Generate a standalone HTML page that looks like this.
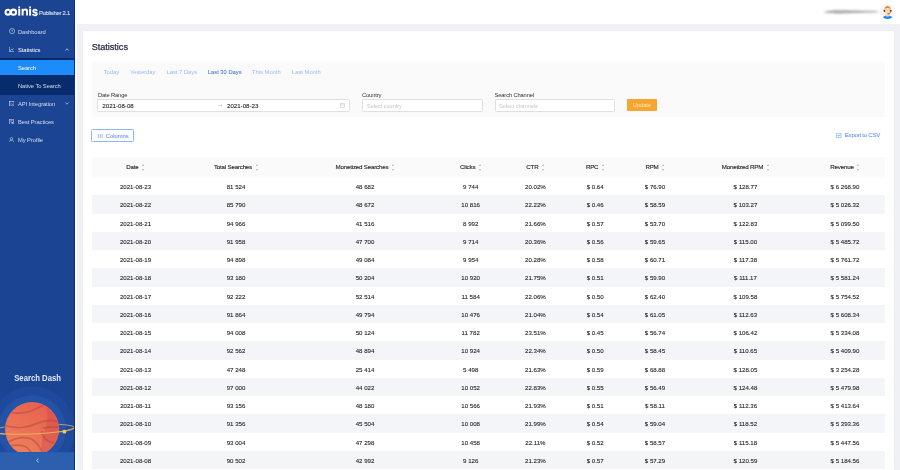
<!DOCTYPE html>
<html><head><meta charset="utf-8">
<style>
*{margin:0;padding:0;box-sizing:border-box}
html,body{width:900px;height:470px;overflow:hidden;background:#fff;font-family:"Liberation Sans",sans-serif}
.a{position:absolute}
#side{left:0;top:0;width:75.2px;height:470px;background:#1b4493;overflow:hidden}
.mi{position:absolute;left:0;width:75px;color:#d3dcee;font-size:5.8px;white-space:nowrap;letter-spacing:-0.08px}
.mi .t{position:absolute;left:18px}
#hdr{left:75.2px;top:0;width:824.8px;height:24px;background:#fff}
#bg{left:77px;top:23.9px;width:823px;height:447px;background:#f0f1f5}
#card{left:82.8px;top:30.5px;width:811.3px;height:440px;background:#fff;box-shadow:0 0 2px rgba(0,0,0,0.05)}
.tr{position:absolute;left:91.6px;width:793.8px;height:18.25px}
.tr.g{background:#f4f5f9}
.c{position:absolute;top:0;height:18.25px;line-height:20.2px;text-align:center;font-size:6.1px;color:#262626;white-space:nowrap;-webkit-text-stroke:0.1px #262626}
.thbg{background:#fafafa}
.th{text-align:center;white-space:nowrap;font-size:6.2px;font-weight:normal;color:#2b2b2b;letter-spacing:-0.2px;-webkit-text-stroke:0.14px #2b2b2b}
.th .ht{display:inline-block;vertical-align:middle;line-height:20.3px}
.th .sorter{display:inline-block;vertical-align:middle;width:2.6px;height:7px;margin-left:3.5px;position:relative;top:-0.2px}
.sorter i{position:absolute;left:0;width:0;height:0;border-left:1.4px solid transparent;border-right:1.4px solid transparent}
.sorter i.up{top:-0.2px;border-bottom:2.1px solid #b4b4b4}
.sorter i.dn{top:4.9px;border-top:2.1px solid #b4b4b4}
.flt{background:#fafafa}
.preset{position:absolute;top:68.8px;font-size:5.8px;color:#97bbf3;white-space:nowrap}
.lbl{position:absolute;font-size:5.8px;color:#333;white-space:nowrap;letter-spacing:-0.15px}
.inp{position:absolute;background:#fff;border:0.5px solid #e0e0e0;border-radius:1.5px;margin-top:-0.3px}
.ph{position:absolute;font-size:5.5px;color:#c4c4c4;white-space:nowrap;margin-top:0.4px}
</style></head><body>
<div id="wrap" style="position:absolute;left:0;top:0;width:900px;height:470px;will-change:transform">
<div id="side" class="a">
  <!-- logo -->
  <svg class="a" style="left:0;top:0" width="75" height="20" viewBox="0 0 75 20">
    <circle cx="8.0" cy="12.15" r="2.45" fill="none" stroke="#fff" stroke-width="2.1"/>
    <circle cx="13.5" cy="12.15" r="2.55" fill="none" stroke="#fff" stroke-width="2.1"/>
    <circle cx="9.9" cy="9.9" r="0.75" fill="#f5b335"/>
    <rect x="18.2" y="8.7" width="2" height="6.9" fill="#fff"/>
    <circle cx="19.2" cy="7.2" r="1" fill="#fff"/>
    <rect x="29.1" y="8.7" width="2" height="6.9" fill="#fff"/>
    <circle cx="30.1" cy="7.2" r="1" fill="#fff"/>
    <path d="M21.6 15.6V8.7H23.5V9.6C24 9 24.8 8.6 25.6 8.6C27.2 8.6 28 9.6 28 11.3V15.6H26.1V11.8C26.1 10.9 25.7 10.4 25 10.4C24.2 10.4 23.6 11 23.6 12V15.6Z" fill="#fff"/>
    <text x="32" y="15.6" font-family="Liberation Sans" font-weight="bold" font-size="13.3" fill="#fff" stroke="#fff" stroke-width="0.35" transform="translate(32 0) scale(0.8 1) translate(-32 0)">s</text>
  </svg>
  <div class="a" style="left:38.9px;top:10px;font-size:5.9px;color:#d9e2f2;white-space:nowrap;letter-spacing:-0.25px;-webkit-text-stroke:0.1px #d9e2f2">Publisher 2.1</div>
  <!-- menu -->
  <div class="mi" style="top:29px"><svg class="a" style="left:8.6px;top:-0.6px" width="6.2" height="6.2" viewBox="0 0 12 12"><circle cx="6" cy="6" r="5" fill="none" stroke="#d3dcee" stroke-width="1.2"/><path d="M6 3.2V6.2L7.8 6.2" fill="none" stroke="#d3dcee" stroke-width="1.1"/></svg><span class="t">Dashboard</span></div>
  <div class="mi" style="top:47px;color:#fff"><svg class="a" style="left:8.9px;top:0px" width="5" height="5" viewBox="0 0 10 10"><path d="M0.6 0V9.4H10M2.5 7.5L5 4.5L6.5 6L9 3" fill="none" stroke="#e8eef8" stroke-width="1.2"/></svg><span class="t">Statistics</span><svg class="a" style="left:64.5px;top:1px" width="4" height="3" viewBox="0 0 8 6"><path d="M0.8 5L4 1.5L7.2 5" fill="none" stroke="#e8eef8" stroke-width="1.3"/></svg></div>
  <div class="a" style="left:0;top:57.6px;width:75.2px;height:37px;background:#072b6c"></div>
  <div class="a" style="left:0;top:59.8px;width:75.2px;height:15.2px;background:#1d8cfb"></div>
  <div class="mi" style="top:64.6px;color:#fff"><span class="t">Search</span></div>
  <div class="mi" style="top:82.6px;color:#d3dcee"><span class="t">Native To Search</span></div>
  <div class="mi" style="top:101px"><svg class="a" style="left:8.8px;top:-0.2px" width="5.3" height="5.3" viewBox="0 0 10 10"><rect x="0.6" y="0.6" width="8.8" height="8.8" fill="none" stroke="#d3dcee" stroke-width="1.1"/><path d="M2.5 3L4.2 4.7L2.5 6.4M5 7H7.5" fill="none" stroke="#d3dcee" stroke-width="1"/></svg><span class="t">API Integration</span><svg class="a" style="left:64.8px;top:1px" width="4" height="3" viewBox="0 0 8 6"><path d="M0.8 1L4 4.5L7.2 1" fill="none" stroke="#d3dcee" stroke-width="1.3"/></svg></div>
  <div class="mi" style="top:118.9px"><svg class="a" style="left:9px;top:-0.3px" width="5" height="5.8" viewBox="0 0 10 11"><rect x="0.6" y="0.6" width="8.8" height="9.8" fill="none" stroke="#d3dcee" stroke-width="1.1"/><path d="M2.5 3H7.5M2.5 5.5H5" fill="none" stroke="#d3dcee" stroke-width="1"/><circle cx="6.5" cy="7.5" r="1.6" fill="#d3dcee"/></svg><span class="t">Best Practices</span></div>
  <div class="mi" style="top:136.6px"><svg class="a" style="left:9px;top:0px" width="5" height="5.6" viewBox="0 0 10 11"><circle cx="5" cy="3.5" r="2.6" fill="none" stroke="#d3dcee" stroke-width="1.1"/><path d="M0.7 10.5C0.7 7.5 2.5 6.3 5 6.3S9.3 7.5 9.3 10.5" fill="none" stroke="#d3dcee" stroke-width="1.1"/></svg><span class="t">My Profile</span></div>
  <!-- search dash -->
  <svg class="a" style="left:0;top:380px" width="75.2" height="72" viewBox="0 380 75.2 72">
    <circle cx="32.1" cy="429.2" r="43" fill="#1f4a9b"/>
    <circle cx="32.1" cy="429.2" r="34" fill="#2452a6"/>
    <defs>
      <linearGradient id="pg" x1="0.1" y1="1" x2="0.7" y2="0">
        <stop offset="0" stop-color="#f0835c"/>
        <stop offset="1" stop-color="#e6604f"/>
      </linearGradient>
      <clipPath id="pc"><circle cx="32.1" cy="429.2" r="26.9"/></clipPath>
    </defs>
    <ellipse cx="33" cy="429.4" rx="41.5" ry="5" transform="rotate(-2.5 33 429.4)" fill="none" stroke="#f0c05a" stroke-width="0.7"/>
    <circle cx="32.1" cy="429.2" r="27.6" fill="#1f58b8"/>
    <circle cx="32.1" cy="429.2" r="26.9" fill="url(#pg)"/>
    <g clip-path="url(#pc)">
      <path d="M44.6 402C48 410 48.5 420 45 430S41 446 42 458L62 458L62 400Z" fill="#c8424a" fill-opacity="0.35"/>
      <g fill="none" stroke="#a8403c" stroke-opacity="0.45" stroke-width="1.7" stroke-linecap="round">
        <path d="M12 412.5C18 413.5 24 413 29 411.5S40 407 45 404"/>
        <path d="M5.5 425.8C12 427.5 19 428 25 427S34 424.5 38 423S46 420 52 420.5S58 421.5 60 422"/>
        <path d="M43.5 428C48 427 54 426.8 60 427.2"/>
        <path d="M42 431.5C42 435 44 439 49.5 441.5S56 443 58 443"/>
        <path d="M8 442.2C13 439.5 18 438 22 437.7S30 437.8 33 440S39 446 42 451"/>
        <path d="M12 445.3C16 445 21 445 24 446S29 449 31 452"/>
      </g>
    </g>
    <circle cx="32.1" cy="429.2" r="26.6" fill="none" stroke="#f26a48" stroke-width="0.6" stroke-opacity="0.9"/>
    <path d="M-8.3 431.2 A41.5 5 -2.5 0 0 74.3 427.6" fill="none" stroke="#f0c05a" stroke-width="0.8"/>
    <circle cx="64.4" cy="431.7" r="1.9" fill="#f7c94a"/>
  </svg>
  <div class="a" style="left:0;top:372.9px;width:75.2px;text-align:center;font-size:8.9px;font-weight:bold;color:#e3eaf6;white-space:nowrap;transform:scaleX(0.87);transform-origin:37.6px 0">Search Dash</div>
  <div class="a" style="left:0;top:451.8px;width:75.2px;height:19px;background:#2c5fad;border-top:1.2px solid #2459b6"></div>
  <svg class="a" style="left:35.6px;top:457.9px" width="3.2" height="5" viewBox="0 0 6.4 10"><path d="M5.2 1.2L1.5 5L5.2 8.8" fill="none" stroke="#d5e0f2" stroke-width="1.7"/></svg>
  <div class="a" style="left:74px;top:0;width:1.2px;height:470px;background:#0a2f80"></div>
</div>
<div id="hdr" class="a">
  <svg class="a" style="left:735px;top:0" width="70" height="24" viewBox="735 0 70 24"><defs><filter id="bl" x="-20%" y="-200%" width="140%" height="500%"><feGaussianBlur stdDeviation="0.9 0.8"/></filter></defs><path d="M749 12C752 10.8 757 10.2 764 10.2S790 10.5 803 11.2L803 12.2C790 12.6 776 13.2 766 13.4S753 13.2 749 12.6Z" fill="#8a8a8a" filter="url(#bl)" opacity="0.75"/></svg>
  <svg class="a" style="left:805.3px;top:3.9px" width="15.2" height="15.2" viewBox="0 0 30 30">
    <defs><clipPath id="av"><circle cx="15" cy="15" r="14.6"/></clipPath></defs>
    <circle cx="15" cy="15" r="14.6" fill="#faf6f1" stroke="#efe6dc" stroke-width="0.8"/>
    <g clip-path="url(#av)">
      <path d="M3.5 30C4 25 9 22.5 15 22.5S26 25 26.5 30Z" fill="#1a8bf5"/>
      <path d="M9 23C10 21 12 20.5 15 20.5S20 21 21 23L15 25Z" fill="#f4d2ac"/>
      <ellipse cx="15" cy="14.2" rx="6.2" ry="7.2" fill="#f7d7b2"/>
      <path d="M8.6 13C8.2 6.5 11.5 4 15 4S21.8 6.5 21.4 13L20.6 10.2C19.5 8.5 17 8 15 8S10.5 8.5 9.4 10.2Z" fill="#e39a34"/>
      <path d="M10 8C12 6 18 6 20 8" fill="none" stroke="#c97a1e" stroke-width="0.8"/>
      <rect x="7.3" y="11.3" width="2.6" height="4.4" rx="1.2" fill="#4b2f4a"/>
      <rect x="20.1" y="11.3" width="2.6" height="4.4" rx="1.2" fill="#4b2f4a"/>
      <path d="M21 15.5C21 18.5 19 19.5 16.5 19.5" fill="none" stroke="#4b2f4a" stroke-width="1"/>
      <circle cx="16.2" cy="19.3" r="1" fill="#4b2f4a"/>
    </g>
  </svg>
</div>
<div id="bg" class="a"></div>
<div id="card" class="a"></div>
<!-- title -->
<div class="a" style="left:91.7px;top:41.2px;font-size:9.2px;color:#2b2d4e;white-space:nowrap;font-weight:normal;-webkit-text-stroke:0.25px #2b2d4e;letter-spacing:-0.05px;margin-top:0.7px">Statistics</div>
<!-- filter panel -->
<div class="a flt" style="left:91.9px;top:62.2px;width:793.5px;height:55px"></div>
<div class="preset" style="left:103.7px">Today</div>
<div class="preset" style="left:129.9px">Yesterday</div>
<div class="preset" style="left:166.5px">Last 7 Days</div>
<div class="preset" style="left:207.8px;color:#4a7ddf;-webkit-text-stroke:0.07px #4a7ddf">Last 30 Days</div>
<div class="preset" style="left:252px">This Month</div>
<div class="preset" style="left:292px">Last Month</div>
<div class="lbl" style="left:97.9px;top:92px">Date Range</div>
<div class="inp" style="left:97.4px;top:99.4px;width:253px;height:12.6px"></div>
<div class="a" style="left:102.3px;top:101.6px;font-size:6.15px;color:#262626;white-space:nowrap;-webkit-text-stroke:0.1px #262626">2021-08-08</div>
<svg class="a" style="left:217.8px;top:103.8px" width="4.6" height="3" viewBox="0 0 9.2 6"><path d="M0 3H8.4M6 0.8L8.4 3L6 5.2" fill="none" stroke="#b0b0b0" stroke-width="0.9"/></svg>
<div class="a" style="left:227px;top:101.6px;font-size:6.15px;color:#262626;white-space:nowrap;-webkit-text-stroke:0.1px #262626">2021-08-23</div>
<svg class="a" style="left:340px;top:102.6px" width="5" height="5" viewBox="0 0 10 10"><rect x="0.7" y="1.2" width="8.6" height="8" fill="none" stroke="#bfbfbf" stroke-width="1"/><path d="M0.7 3.8H9.3" stroke="#bfbfbf" stroke-width="1"/></svg>
<div class="lbl" style="left:362px;top:92px">Country</div>
<div class="inp" style="left:362.2px;top:99.4px;width:120.4px;height:12.6px"></div>
<div class="ph" style="left:367px;top:102.4px">Select country</div>
<div class="lbl" style="left:494.5px;top:92px">Search Channel</div>
<div class="inp" style="left:494.6px;top:99.4px;width:120.4px;height:12.6px"></div>
<div class="ph" style="left:499px;top:102.4px">Select channels</div>
<div class="a" style="left:626.7px;top:99.3px;width:30.4px;height:11.7px;background:#f6a52e;border-radius:0.9px;color:#fde6c2;font-size:5.7px;line-height:12.2px;text-align:center">Update</div>
<!-- columns btn -->
<div class="a" style="left:91.3px;top:129.4px;width:42.8px;height:12.3px;border:0.75px solid #8db4f5;border-radius:1.6px;background:#fff"></div>
<svg class="a" style="left:97.9px;top:133.5px" width="4.8" height="4" viewBox="0 0 9.6 8"><path d="M1 0V8M4.8 0V8M8.6 0V8" stroke="#5a8fec" stroke-width="1.2"/></svg>
<div class="a" style="left:105.8px;top:132.7px;font-size:5.9px;color:#4a82e8;white-space:nowrap;letter-spacing:-0.05px">Columns</div>
<!-- export -->
<svg class="a" style="left:836.2px;top:132.9px" width="5.4" height="5" viewBox="0 0 10.8 10"><path d="M0.6 0.6H10.2V9.4H0.6Z" fill="none" stroke="#5a8ff0" stroke-width="1.1"/><path d="M9 5H3.5M5.3 3.2L3.5 5L5.3 6.8" fill="none" stroke="#5a8ff0" stroke-width="1.1"/></svg>
<div class="a" style="left:844.8px;top:131.4px;font-size:6.2px;color:#4f86ec;white-space:nowrap;letter-spacing:-0.3px">Export to CSV</div>
<div class="a thbg" style="left:91.6px;top:157.4px;width:793.8px;height:19.80px"></div>
<div class="a th" style="left:55.50px;top:157.4px;width:160px;height:19.80px"><span class="ht">Date</span><span class="sorter"><i class="up"></i><i class="dn"></i></span></div>
<div class="a th" style="left:156.00px;top:157.4px;width:160px;height:19.80px"><span class="ht">Total Searches</span><span class="sorter"><i class="up"></i><i class="dn"></i></span></div>
<div class="a th" style="left:285.00px;top:157.4px;width:160px;height:19.80px"><span class="ht">Monetized Searches</span><span class="sorter"><i class="up"></i><i class="dn"></i></span></div>
<div class="a th" style="left:390.70px;top:157.4px;width:160px;height:19.80px"><span class="ht">Clicks</span><span class="sorter"><i class="up"></i><i class="dn"></i></span></div>
<div class="a th" style="left:455.40px;top:157.4px;width:160px;height:19.80px"><span class="ht">CTR</span><span class="sorter"><i class="up"></i><i class="dn"></i></span></div>
<div class="a th" style="left:515.20px;top:157.4px;width:160px;height:19.80px"><span class="ht">RPC</span><span class="sorter"><i class="up"></i><i class="dn"></i></span></div>
<div class="a th" style="left:575.00px;top:157.4px;width:160px;height:19.80px"><span class="ht">RPM</span><span class="sorter"><i class="up"></i><i class="dn"></i></span></div>
<div class="a th" style="left:665.50px;top:157.4px;width:160px;height:19.80px"><span class="ht">Monetized RPM</span><span class="sorter"><i class="up"></i><i class="dn"></i></span></div>
<div class="a th" style="left:765.00px;top:157.4px;width:160px;height:19.80px"><span class="ht">Revenue</span><span class="sorter"><i class="up"></i><i class="dn"></i></span></div>
<div class="a tr" style="top:177.20px">
<div class="c" style="left:-16.10px;width:120px">2021-08-23</div>
<div class="c" style="left:84.40px;width:120px">81 524</div>
<div class="c" style="left:213.40px;width:120px">48 682</div>
<div class="c" style="left:319.10px;width:120px">9 744</div>
<div class="c" style="left:383.80px;width:120px">20.02%</div>
<div class="c" style="left:443.60px;width:120px">$ 0.64</div>
<div class="c" style="left:503.40px;width:120px">$ 76.90</div>
<div class="c" style="left:593.90px;width:120px">$ 128.77</div>
<div class="c" style="left:693.40px;width:120px">$ 6 268.90</div>
</div>
<div class="a tr g" style="top:195.45px">
<div class="c" style="left:-16.10px;width:120px">2021-08-22</div>
<div class="c" style="left:84.40px;width:120px">85 790</div>
<div class="c" style="left:213.40px;width:120px">48 672</div>
<div class="c" style="left:319.10px;width:120px">10 816</div>
<div class="c" style="left:383.80px;width:120px">22.22%</div>
<div class="c" style="left:443.60px;width:120px">$ 0.46</div>
<div class="c" style="left:503.40px;width:120px">$ 58.59</div>
<div class="c" style="left:593.90px;width:120px">$ 103.27</div>
<div class="c" style="left:693.40px;width:120px">$ 5 026.32</div>
</div>
<div class="a tr" style="top:213.70px">
<div class="c" style="left:-16.10px;width:120px">2021-08-21</div>
<div class="c" style="left:84.40px;width:120px">94 966</div>
<div class="c" style="left:213.40px;width:120px">41 516</div>
<div class="c" style="left:319.10px;width:120px">8 992</div>
<div class="c" style="left:383.80px;width:120px">21.66%</div>
<div class="c" style="left:443.60px;width:120px">$ 0.57</div>
<div class="c" style="left:503.40px;width:120px">$ 53.70</div>
<div class="c" style="left:593.90px;width:120px">$ 122.83</div>
<div class="c" style="left:693.40px;width:120px">$ 5 099.50</div>
</div>
<div class="a tr g" style="top:231.95px">
<div class="c" style="left:-16.10px;width:120px">2021-08-20</div>
<div class="c" style="left:84.40px;width:120px">91 958</div>
<div class="c" style="left:213.40px;width:120px">47 700</div>
<div class="c" style="left:319.10px;width:120px">9 714</div>
<div class="c" style="left:383.80px;width:120px">20.36%</div>
<div class="c" style="left:443.60px;width:120px">$ 0.56</div>
<div class="c" style="left:503.40px;width:120px">$ 59.65</div>
<div class="c" style="left:593.90px;width:120px">$ 115.00</div>
<div class="c" style="left:693.40px;width:120px">$ 5 485.72</div>
</div>
<div class="a tr" style="top:250.20px">
<div class="c" style="left:-16.10px;width:120px">2021-08-19</div>
<div class="c" style="left:84.40px;width:120px">94 898</div>
<div class="c" style="left:213.40px;width:120px">49 084</div>
<div class="c" style="left:319.10px;width:120px">9 954</div>
<div class="c" style="left:383.80px;width:120px">20.28%</div>
<div class="c" style="left:443.60px;width:120px">$ 0.58</div>
<div class="c" style="left:503.40px;width:120px">$ 60.71</div>
<div class="c" style="left:593.90px;width:120px">$ 117.38</div>
<div class="c" style="left:693.40px;width:120px">$ 5 761.72</div>
</div>
<div class="a tr g" style="top:268.45px">
<div class="c" style="left:-16.10px;width:120px">2021-08-18</div>
<div class="c" style="left:84.40px;width:120px">93 180</div>
<div class="c" style="left:213.40px;width:120px">50 204</div>
<div class="c" style="left:319.10px;width:120px">10 920</div>
<div class="c" style="left:383.80px;width:120px">21.75%</div>
<div class="c" style="left:443.60px;width:120px">$ 0.51</div>
<div class="c" style="left:503.40px;width:120px">$ 59.90</div>
<div class="c" style="left:593.90px;width:120px">$ 111.17</div>
<div class="c" style="left:693.40px;width:120px">$ 5 581.24</div>
</div>
<div class="a tr" style="top:286.70px">
<div class="c" style="left:-16.10px;width:120px">2021-08-17</div>
<div class="c" style="left:84.40px;width:120px">92 222</div>
<div class="c" style="left:213.40px;width:120px">52 514</div>
<div class="c" style="left:319.10px;width:120px">11 584</div>
<div class="c" style="left:383.80px;width:120px">22.06%</div>
<div class="c" style="left:443.60px;width:120px">$ 0.50</div>
<div class="c" style="left:503.40px;width:120px">$ 62.40</div>
<div class="c" style="left:593.90px;width:120px">$ 109.58</div>
<div class="c" style="left:693.40px;width:120px">$ 5 754.52</div>
</div>
<div class="a tr g" style="top:304.95px">
<div class="c" style="left:-16.10px;width:120px">2021-08-16</div>
<div class="c" style="left:84.40px;width:120px">91 864</div>
<div class="c" style="left:213.40px;width:120px">49 794</div>
<div class="c" style="left:319.10px;width:120px">10 476</div>
<div class="c" style="left:383.80px;width:120px">21.04%</div>
<div class="c" style="left:443.60px;width:120px">$ 0.54</div>
<div class="c" style="left:503.40px;width:120px">$ 61.05</div>
<div class="c" style="left:593.90px;width:120px">$ 112.63</div>
<div class="c" style="left:693.40px;width:120px">$ 5 608.34</div>
</div>
<div class="a tr" style="top:323.20px">
<div class="c" style="left:-16.10px;width:120px">2021-08-15</div>
<div class="c" style="left:84.40px;width:120px">94 008</div>
<div class="c" style="left:213.40px;width:120px">50 124</div>
<div class="c" style="left:319.10px;width:120px">11 782</div>
<div class="c" style="left:383.80px;width:120px">23.51%</div>
<div class="c" style="left:443.60px;width:120px">$ 0.45</div>
<div class="c" style="left:503.40px;width:120px">$ 56.74</div>
<div class="c" style="left:593.90px;width:120px">$ 106.42</div>
<div class="c" style="left:693.40px;width:120px">$ 5 334.08</div>
</div>
<div class="a tr g" style="top:341.45px">
<div class="c" style="left:-16.10px;width:120px">2021-08-14</div>
<div class="c" style="left:84.40px;width:120px">92 562</div>
<div class="c" style="left:213.40px;width:120px">48 894</div>
<div class="c" style="left:319.10px;width:120px">10 924</div>
<div class="c" style="left:383.80px;width:120px">22.34%</div>
<div class="c" style="left:443.60px;width:120px">$ 0.50</div>
<div class="c" style="left:503.40px;width:120px">$ 58.45</div>
<div class="c" style="left:593.90px;width:120px">$ 110.65</div>
<div class="c" style="left:693.40px;width:120px">$ 5 409.90</div>
</div>
<div class="a tr" style="top:359.70px">
<div class="c" style="left:-16.10px;width:120px">2021-08-13</div>
<div class="c" style="left:84.40px;width:120px">47 248</div>
<div class="c" style="left:213.40px;width:120px">25 414</div>
<div class="c" style="left:319.10px;width:120px">5 498</div>
<div class="c" style="left:383.80px;width:120px">21.63%</div>
<div class="c" style="left:443.60px;width:120px">$ 0.59</div>
<div class="c" style="left:503.40px;width:120px">$ 68.88</div>
<div class="c" style="left:593.90px;width:120px">$ 128.05</div>
<div class="c" style="left:693.40px;width:120px">$ 3 254.28</div>
</div>
<div class="a tr g" style="top:377.95px">
<div class="c" style="left:-16.10px;width:120px">2021-08-12</div>
<div class="c" style="left:84.40px;width:120px">97 000</div>
<div class="c" style="left:213.40px;width:120px">44 022</div>
<div class="c" style="left:319.10px;width:120px">10 052</div>
<div class="c" style="left:383.80px;width:120px">22.83%</div>
<div class="c" style="left:443.60px;width:120px">$ 0.55</div>
<div class="c" style="left:503.40px;width:120px">$ 56.49</div>
<div class="c" style="left:593.90px;width:120px">$ 124.48</div>
<div class="c" style="left:693.40px;width:120px">$ 5 479.98</div>
</div>
<div class="a tr" style="top:396.20px">
<div class="c" style="left:-16.10px;width:120px">2021-08-11</div>
<div class="c" style="left:84.40px;width:120px">93 156</div>
<div class="c" style="left:213.40px;width:120px">48 180</div>
<div class="c" style="left:319.10px;width:120px">10 566</div>
<div class="c" style="left:383.80px;width:120px">21.93%</div>
<div class="c" style="left:443.60px;width:120px">$ 0.51</div>
<div class="c" style="left:503.40px;width:120px">$ 58.11</div>
<div class="c" style="left:593.90px;width:120px">$ 112.36</div>
<div class="c" style="left:693.40px;width:120px">$ 5 413.64</div>
</div>
<div class="a tr g" style="top:414.45px">
<div class="c" style="left:-16.10px;width:120px">2021-08-10</div>
<div class="c" style="left:84.40px;width:120px">91 356</div>
<div class="c" style="left:213.40px;width:120px">45 504</div>
<div class="c" style="left:319.10px;width:120px">10 008</div>
<div class="c" style="left:383.80px;width:120px">21.99%</div>
<div class="c" style="left:443.60px;width:120px">$ 0.54</div>
<div class="c" style="left:503.40px;width:120px">$ 59.04</div>
<div class="c" style="left:593.90px;width:120px">$ 118.52</div>
<div class="c" style="left:693.40px;width:120px">$ 5 393.36</div>
</div>
<div class="a tr" style="top:432.70px">
<div class="c" style="left:-16.10px;width:120px">2021-08-09</div>
<div class="c" style="left:84.40px;width:120px">93 004</div>
<div class="c" style="left:213.40px;width:120px">47 298</div>
<div class="c" style="left:319.10px;width:120px">10 458</div>
<div class="c" style="left:383.80px;width:120px">22.11%</div>
<div class="c" style="left:443.60px;width:120px">$ 0.52</div>
<div class="c" style="left:503.40px;width:120px">$ 58.57</div>
<div class="c" style="left:593.90px;width:120px">$ 115.18</div>
<div class="c" style="left:693.40px;width:120px">$ 5 447.56</div>
</div>
<div class="a tr g" style="top:450.95px">
<div class="c" style="left:-16.10px;width:120px">2021-08-08</div>
<div class="c" style="left:84.40px;width:120px">90 502</div>
<div class="c" style="left:213.40px;width:120px">42 992</div>
<div class="c" style="left:319.10px;width:120px">9 126</div>
<div class="c" style="left:383.80px;width:120px">21.23%</div>
<div class="c" style="left:443.60px;width:120px">$ 0.57</div>
<div class="c" style="left:503.40px;width:120px">$ 57.29</div>
<div class="c" style="left:593.90px;width:120px">$ 120.59</div>
<div class="c" style="left:693.40px;width:120px">$ 5 184.56</div>
</div>
</div>
</body></html>
